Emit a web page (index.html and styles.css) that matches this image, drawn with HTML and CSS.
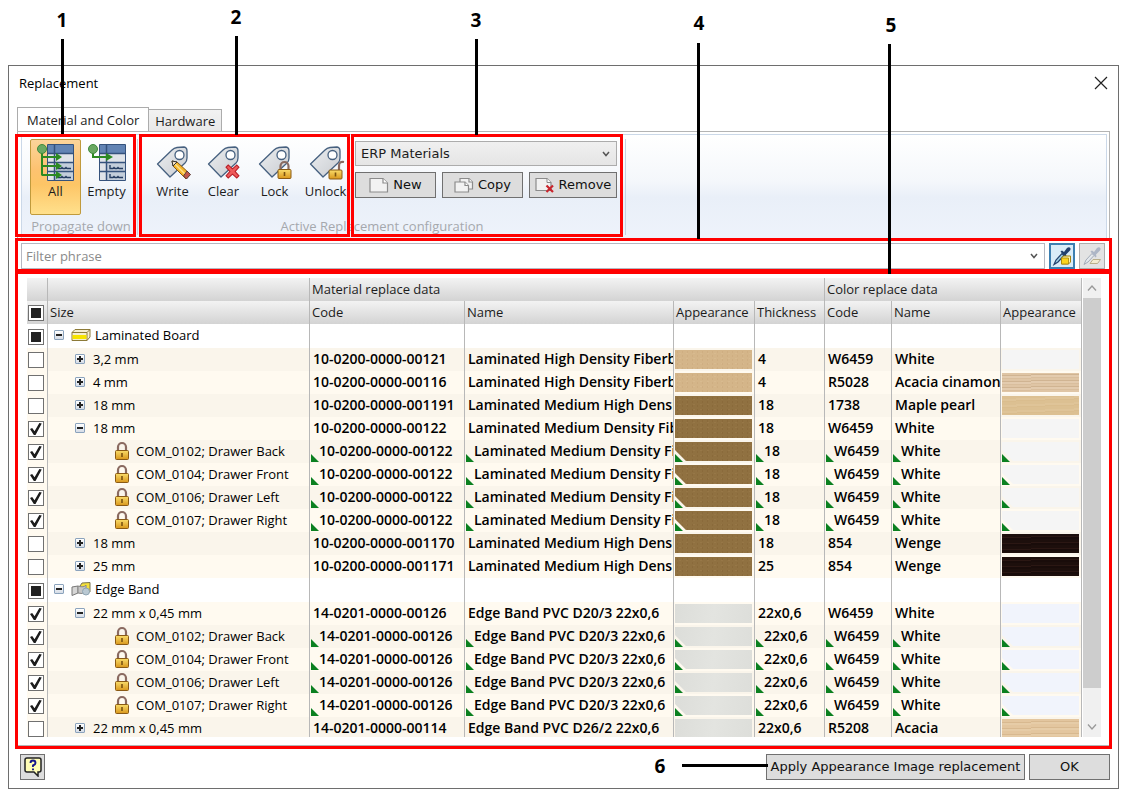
FILE: index.html
```html
<!DOCTYPE html>
<html lang="en">
<head>
<meta charset="utf-8">
<title>Replacement</title>
<link rel="stylesheet" href="styles.css">
</head>
<body>
<svg class="defs" aria-hidden="true">
  <defs>
    <linearGradient id="gold" x1="0" y1="0" x2="0" y2="1"><stop offset="0" stop-color="#f9dc6a"/><stop offset="1" stop-color="#d9971c"/></linearGradient>
    <linearGradient id="steel" x1="0" y1="0" x2="1" y2="1"><stop offset="0" stop-color="#eceef0"/><stop offset="1" stop-color="#c9ccd1"/></linearGradient>
    <symbol id="tag" viewBox="0 0 36 36"><path d="M2.500 20 17 6Q19 4 22 3.500L29 3Q32 3.500 32 7V14Q32 17 30 19L15 33Z" fill="url(#steel)" stroke="#46607f" stroke-width="1.300" stroke-linejoin="round"/><circle cx="24.500" cy="11" r="4.500" fill="#fff" stroke="#46607f" stroke-width="1.300"/></symbol>
    <symbol id="padlock" viewBox="0 0 16 20"><path d="M4 10V6a4 4 0 0 1 8 0v4" fill="none" stroke="#8a6a60" stroke-width="2.200"/><rect x="1.500" y="9.500" width="13" height="9" rx="1" fill="url(#gold)" stroke="#8a5a14"/><path d="M8 12v4" stroke="#7a5210" stroke-width="1.600"/></symbol>
    <symbol id="cross" viewBox="0 0 14 14"><path d="M1 3 3 1 7 4.500 11 1 13 3 9.500 7 13 11 11 13 7 9.500 3 13 1 11 4.500 7Z" fill="#ee5a5a" stroke="#b81f28" stroke-width="1"/></symbol>
    <symbol id="grid" viewBox="0 0 27 37"><path d="M.5.5h26v36H.5Z" fill="#dfe3e8" stroke="#35527c"/><path d="M1 1h25v8H1Z" fill="#6284b4"/><path d="M8 19h18v17H8Z" fill="#c3cedb"/><path d="M7.500 1v35M1 9.500h25M1 18.500h25M1 27.500h25" stroke="#35527c" stroke-width="1.500"/><path d="M11 21v3.500h3l1-1 1 1h2l1-1 1 1h4M11 30v3.500h3l1-1 1 1h2l1-1 1 1h4" fill="none" stroke="#263f63" stroke-width="1.400"/></symbol>
    <symbol id="board" viewBox="0 0 20 14"><path d="M1 4.500 4 1.500H19V9L16 12.500H1Z" fill="#f6efd0" stroke="#8c7a38" stroke-linejoin="round"/><path d="M1 4.500H16V12.500M16 4.500 19 1.500" fill="none" stroke="#8c7a38"/><path d="M1.500 7H15.500v4H1.500Z" fill="#f7e300"/></symbol>
    <symbol id="band" viewBox="0 0 20 14"><path d="M9 4 11 1 19 .5V10L13 8Z" fill="#f3df3a" stroke="#777250"/><path d="M1 5 7 4V11L1 13.500Z" fill="#d6d6d6" stroke="#777"/><path d="M7 4Q13 6 15 3V9Q11 13 7 11Z" fill="#c6c6c6" stroke="#888"/><circle cx="15" cy="9.500" r="3.500" fill="#b9c8d2" stroke="#8fa5b3"/></symbol>
    <symbol id="sheet" viewBox="0 0 20 16"><path d="M1 1.500H14L18.500 6V15H1Z" fill="#f2f2f2" stroke="#8b8b8b" stroke-width="1.200"/><path d="M14 1.500V6H18.500" fill="#fff" stroke="#8b8b8b" stroke-width="1.200"/></symbol>
    <symbol id="chev" viewBox="0 0 10 8"><path d="M2 2 5 5.500 8 2" fill="none" stroke="#555" stroke-width="1.500"/></symbol>
  </defs>
</svg>

<main class="dialog">
  <header class="titlebar">
    <h1>Replacement</h1>
    <button class="close" aria-label="Close"><svg width="14" height="14" viewBox="0 0 14 14"><path d="M1 1 13 13M13 1 1 13" stroke="#222" stroke-width="1.200"/></svg></button>
  </header>
  <nav class="tabs" role="tablist">
    <button class="tab active" role="tab" aria-selected="true">Material and Color</button>
    <button class="tab" role="tab" aria-selected="false">Hardware</button>
  </nav>
  <section class="panel">
    <div class="ribbon">
      <div class="group">
        <div class="tools">
          <button class="tool selected">
            <svg width="38" height="38" viewBox="0 0 38 38"><use href="#grid" x="10" y="1" width="27" height="37"/><path d="M5 6V32.500M5 14H21M5 23H21M5 32H21" fill="none" stroke="#2c8a22" stroke-width="2"/><path d="M19 10 25 14 19 18ZM19 19 25 23 19 27ZM19 28 25 32 19 36Z" fill="#2c8a22"/><circle cx="5" cy="6" r="4.500" fill="#6aa862" stroke="#3f8a3a"/></svg>
            All</button>
          <button class="tool">
            <svg width="38" height="38" viewBox="0 0 38 38"><use href="#grid" x="11" y="1" width="27" height="37"/><path d="M5 6V14H20" fill="none" stroke="#2c8a22" stroke-width="2"/><path d="M18 10 25 14 18 18Z" fill="#2c8a22"/><circle cx="5" cy="6" r="4.500" fill="#6aa862" stroke="#3f8a3a"/></svg>
            Empty</button>
        </div>
        <span class="caption">Propagate down</span>
      </div>
      <div class="group wide">
        <div class="tools">
          <button class="tool">
            <svg width="38" height="38" viewBox="0 0 38 38"><use href="#tag" x="1" y="1" width="36" height="36"/><path d="M18 18 23 19 36 31 32 36 19 23Z" fill="#f5b62b" stroke="#8a5a14"/><path d="M20 20 33 33" stroke="#fde08a" stroke-width="1.500"/><path d="M18 18 23 19 19 23Z" fill="#f8e2c4" stroke="#333"/><path d="M33 28 36.500 31.500 32.500 36 29.500 33Z" fill="#c2574b" stroke="#5c4038"/></svg>
            Write</button>
          <button class="tool">
            <svg width="38" height="38" viewBox="0 0 38 38"><use href="#tag" x="1" y="1" width="36" height="36"/><use href="#cross" x="20" y="21" width="15" height="15"/></svg>
            Clear</button>
          <button class="tool">
            <svg width="38" height="38" viewBox="0 0 38 38"><use href="#tag" x="1" y="1" width="36" height="36"/><use href="#padlock" x="20" y="17" width="17" height="20"/></svg>
            Lock</button>
          <button class="tool">
            <svg width="38" height="38" viewBox="0 0 38 38"><use href="#tag" x="1" y="1" width="36" height="36"/><path d="M32 28V23Q32 18 37 19" fill="none" stroke="#8a6a60" stroke-width="2.200"/><rect x="22" y="27" width="13" height="9" rx="1" fill="url(#gold)" stroke="#8a5a14"/><path d="M28.500 29.500v4" stroke="#7a5210" stroke-width="1.600"/></svg>
            Unlock</button>
          <div class="config">
            <div class="picker"><select aria-label="Replacement configuration"><option>ERP Materials</option></select><svg width="10" height="8"><use href="#chev"/></svg></div>
            <div class="actions">
              <button class="push"><svg width="20" height="16"><use href="#sheet"/></svg>New</button>
              <button class="push"><svg width="20" height="16" viewBox="0 0 20 16"><path d="M6 5V1.500H15L18.500 5V12H15" fill="#f2f2f2" stroke="#8b8b8b" stroke-width="1.200"/><path d="M1 5H11L14.500 8.500V15H1Z" fill="#f2f2f2" stroke="#8b8b8b" stroke-width="1.200"/><path d="M11 5V8.500H14.500M15 1.500V5H18.500" fill="#fff" stroke="#8b8b8b" stroke-width="1.200"/></svg>Copy</button>
              <button class="push"><svg width="20" height="16" viewBox="0 0 20 16"><path d="M1 1.500H12L16 5.500V13.500H1Z" fill="#f2f2f2" stroke="#8b8b8b" stroke-width="1.200"/><path d="M12 1.500V5.500H16" fill="#fff" stroke="#8b8b8b"/><path d="M11.500 8.500 18 15M18 8.500 11.500 15" stroke="#c9252d" stroke-width="2.200"/></svg>Remove</button>
            </div>
          </div>
        </div>
        <span class="caption">Active Replacement configuration</span>
      </div>
    </div>

    <div class="filter">
      <div class="combo">
        <input type="text" placeholder="Filter phrase" aria-label="Filter phrase">
        <button aria-label="Filter history"><svg width="10" height="8"><use href="#chev"/></svg></button>
      </div>
      <button class="pick on" aria-label="Pick material"><svg width="20" height="20" viewBox="0 0 20 20"><path d="M2 18.500 4 14 10 7.500 12 9.500 6 16Z" fill="#9fd0e4" stroke="#22406d" stroke-width="1.200"/><path d="M8.500 5.500 10 4.500 12 6 15 2Q17.500 .5 18.500 2.500Q19 4 17 5.500L14 8.500 14.500 10.500 13.500 11.500Z" fill="#22406d"/><path d="M9.500 12 11.500 10H18.500V16L16.500 18H9.500Z" fill="#fff3a8" stroke="#a5830b" stroke-linejoin="round"/><path d="M9.500 12H16.500V18H9.500Z" fill="#fbd31c" stroke="#a5830b" stroke-width=".8"/></svg></button>
      <button class="pick" aria-label="Pick appearance" disabled><svg width="20" height="20" viewBox="0 0 20 20"><path d="M2 18.500 4 14 10 7.500 12 9.500 6 16Z" fill="#e4e8ec" stroke="#a3abb8"/><path d="M8.500 5.500 10 4.500 12 6 15 2Q17.500 .5 18.500 2.500Q19 4 17 5.500L14 8.500 14.500 10.500 13.500 11.500Z" fill="#adb6c6"/><path d="M8 17.500 11 13.500H18.500L15.500 17.500Z" fill="#f3ecd0" stroke="#b9af8b"/></svg></button>
    </div>

    <div class="list">
      <div class="viewport">
        <table>
          <colgroup><col class="c-check"><col class="c-size"><col class="c-code"><col class="c-name"><col class="c-look"><col class="c-thick"><col class="c-ccode"><col class="c-cname"><col class="c-look"></colgroup>
          <thead>
            <tr><th></th><th></th><th colspan="4">Material replace data</th><th colspan="3">Color replace data</th></tr>
            <tr><th><input type="checkbox" class="mixed" aria-label="Select all"></th><th>Size</th><th>Code</th><th>Name</th><th>Appearance</th><th>Thickness</th><th>Code</th><th>Name</th><th>Appearance</th></tr>
          </thead>
          <tbody>
            <tr class="head"><td><input type="checkbox" class="mixed" aria-label="Laminated Board"></td><td><div class="node"><button class="exp open" aria-label="Collapse"></button><svg width="20" height="14"><use href="#board"/></svg>Laminated Board</div></td><td></td><td></td><td></td><td></td><td></td><td></td><td></td></tr>
            <tr><td><input type="checkbox" aria-label="3,2 mm"></td><td><div class="node l1"><button class="exp" aria-label="Expand"></button>3,2 mm</div></td><td>10-0200-0000-00121</td><td>Laminated High Density Fiberboard</td><td><i class="sw tan"></i></td><td>4</td><td>W6459</td><td>White</td><td><i class="sw white"></i></td></tr>
            <tr><td><input type="checkbox" aria-label="4 mm"></td><td><div class="node l1"><button class="exp" aria-label="Expand"></button>4 mm</div></td><td>10-0200-0000-00116</td><td>Laminated High Density Fiberboard</td><td><i class="sw tan"></i></td><td>4</td><td>R5028</td><td>Acacia cinamon</td><td><i class="sw cinamon"></i></td></tr>
            <tr><td><input type="checkbox" aria-label="18 mm"></td><td><div class="node l1"><button class="exp" aria-label="Expand"></button>18 mm</div></td><td>10-0200-0000-001191</td><td>Laminated Medium High Density</td><td><i class="sw brown"></i></td><td>18</td><td>1738</td><td>Maple pearl</td><td><i class="sw maple"></i></td></tr>
            <tr><td><input type="checkbox" checked aria-label="18 mm"></td><td><div class="node l1"><button class="exp open" aria-label="Collapse"></button>18 mm</div></td><td>10-0200-0000-00122</td><td>Laminated Medium Density Fiberboard</td><td><i class="sw brown"></i></td><td>18</td><td>W6459</td><td>White</td><td><i class="sw white"></i></td></tr>
            <tr class="item"><td><input type="checkbox" checked aria-label="COM_0102"></td><td><div class="node l2"><svg width="16" height="20"><use href="#padlock"/></svg>COM_0102; Drawer Back</div></td><td>10-0200-0000-00122</td><td>Laminated Medium Density Fiberboard</td><td><i class="sw brown"></i></td><td>18</td><td>W6459</td><td>White</td><td><i class="sw white"></i></td></tr>
            <tr class="item"><td><input type="checkbox" checked aria-label="COM_0104"></td><td><div class="node l2"><svg width="16" height="20"><use href="#padlock"/></svg>COM_0104; Drawer Front</div></td><td>10-0200-0000-00122</td><td>Laminated Medium Density Fiberboard</td><td><i class="sw brown"></i></td><td>18</td><td>W6459</td><td>White</td><td><i class="sw white"></i></td></tr>
            <tr class="item"><td><input type="checkbox" checked aria-label="COM_0106"></td><td><div class="node l2"><svg width="16" height="20"><use href="#padlock"/></svg>COM_0106; Drawer Left</div></td><td>10-0200-0000-00122</td><td>Laminated Medium Density Fiberboard</td><td><i class="sw brown"></i></td><td>18</td><td>W6459</td><td>White</td><td><i class="sw white"></i></td></tr>
            <tr class="item"><td><input type="checkbox" checked aria-label="COM_0107"></td><td><div class="node l2"><svg width="16" height="20"><use href="#padlock"/></svg>COM_0107; Drawer Right</div></td><td>10-0200-0000-00122</td><td>Laminated Medium Density Fiberboard</td><td><i class="sw brown"></i></td><td>18</td><td>W6459</td><td>White</td><td><i class="sw white"></i></td></tr>
            <tr><td><input type="checkbox" aria-label="18 mm"></td><td><div class="node l1"><button class="exp" aria-label="Expand"></button>18 mm</div></td><td>10-0200-0000-001170</td><td>Laminated Medium High Density</td><td><i class="sw brown"></i></td><td>18</td><td>854</td><td>Wenge</td><td><i class="sw wenge"></i></td></tr>
            <tr><td><input type="checkbox" aria-label="25 mm"></td><td><div class="node l1"><button class="exp" aria-label="Expand"></button>25 mm</div></td><td>10-0200-0000-001171</td><td>Laminated Medium High Density</td><td><i class="sw brown"></i></td><td>25</td><td>854</td><td>Wenge</td><td><i class="sw wenge"></i></td></tr>
            <tr class="head"><td><input type="checkbox" class="mixed" aria-label="Edge Band"></td><td><div class="node"><button class="exp open" aria-label="Collapse"></button><svg width="20" height="14"><use href="#band"/></svg>Edge Band</div></td><td></td><td></td><td></td><td></td><td></td><td></td><td></td></tr>
            <tr><td><input type="checkbox" checked aria-label="22 mm x 0,45 mm"></td><td><div class="node l1"><button class="exp open" aria-label="Collapse"></button>22 mm x 0,45 mm</div></td><td>14-0201-0000-00126</td><td>Edge Band PVC D20/3 22x0,6</td><td><i class="sw grey"></i></td><td>22x0,6</td><td>W6459</td><td>White</td><td><i class="sw ice"></i></td></tr>
            <tr class="item"><td><input type="checkbox" checked aria-label="COM_0102"></td><td><div class="node l2"><svg width="16" height="20"><use href="#padlock"/></svg>COM_0102; Drawer Back</div></td><td>14-0201-0000-00126</td><td>Edge Band PVC D20/3 22x0,6</td><td><i class="sw grey"></i></td><td>22x0,6</td><td>W6459</td><td>White</td><td><i class="sw ice"></i></td></tr>
            <tr class="item"><td><input type="checkbox" checked aria-label="COM_0104"></td><td><div class="node l2"><svg width="16" height="20"><use href="#padlock"/></svg>COM_0104; Drawer Front</div></td><td>14-0201-0000-00126</td><td>Edge Band PVC D20/3 22x0,6</td><td><i class="sw grey"></i></td><td>22x0,6</td><td>W6459</td><td>White</td><td><i class="sw ice"></i></td></tr>
            <tr class="item"><td><input type="checkbox" checked aria-label="COM_0106"></td><td><div class="node l2"><svg width="16" height="20"><use href="#padlock"/></svg>COM_0106; Drawer Left</div></td><td>14-0201-0000-00126</td><td>Edge Band PVC D20/3 22x0,6</td><td><i class="sw grey"></i></td><td>22x0,6</td><td>W6459</td><td>White</td><td><i class="sw ice"></i></td></tr>
            <tr class="item"><td><input type="checkbox" checked aria-label="COM_0107"></td><td><div class="node l2"><svg width="16" height="20"><use href="#padlock"/></svg>COM_0107; Drawer Right</div></td><td>14-0201-0000-00126</td><td>Edge Band PVC D20/3 22x0,6</td><td><i class="sw grey"></i></td><td>22x0,6</td><td>W6459</td><td>White</td><td><i class="sw ice"></i></td></tr>
            <tr><td><input type="checkbox" aria-label="22 mm x 0,45 mm"></td><td><div class="node l1"><button class="exp" aria-label="Expand"></button>22 mm x 0,45 mm</div></td><td>14-0201-0000-00114</td><td>Edge Band PVC D26/2 22x0,6</td><td><i class="sw grey"></i></td><td>22x0,6</td><td>R5208</td><td>Acacia</td><td><i class="sw acacia"></i></td></tr>
          </tbody>
        </table>
      </div>
      <div class="scrollbar">
        <button aria-label="Scroll up"><svg width="12" height="8" viewBox="0 0 12 8"><path d="M2 6.500 6 2 10 6.500" fill="none" stroke="#999" stroke-width="1.300"/></svg></button>
        <div class="track"><div class="thumb"></div></div>
        <button aria-label="Scroll down"><svg width="12" height="8" viewBox="0 0 12 8"><path d="M2 1.500 6 6 10 1.500" fill="none" stroke="#999" stroke-width="1.300"/></svg></button>
      </div>
    </div>
  </section>
  <footer class="footer">
    <button class="help" aria-label="Help"><svg width="18" height="20" viewBox="0 0 18 20"><path d="M3 1H15Q17 1 17 3V13Q17 15 15 15H14V19L10 15H3Q1 15 1 13V3Q1 1 3 1Z" fill="#fffdb5" stroke="#222" stroke-width="1.500"/><path d="M6.500 6Q6.500 3.500 9 3.500T11.500 6Q11.500 7.500 9 8.500V10M9 11.500V13.200" fill="none" stroke="#16168c" stroke-width="1.900"/></svg></button>
    <button class="push apply">Apply Appearance Image replacement</button>
    <button class="push ok">OK</button>
  </footer>
</main>

<div class="frame f1"></div><div class="frame f2"></div><div class="frame f3"></div><div class="frame f4"></div><div class="frame f5"></div>
<div class="line v n1"></div><div class="line v n2"></div><div class="line v n3"></div><div class="line v n4"></div><div class="line v n5"></div><div class="line h n6"></div>
<span class="num m1">1</span><span class="num m2">2</span><span class="num m3">3</span><span class="num m4">4</span><span class="num m5">5</span><span class="num m6">6</span>
</body>
</html>
```
FILE: styles.css
```css
* { box-sizing: border-box; }

body {
  position: relative;
  display: flex;
  height: 100vh;
  margin: 0;
  padding: 65px 4px 6px 8px;
  overflow: hidden;
  background: #fff;
  color: #1c1c1c;
  font: 13px/18px "Open Sans", "Noto Sans", sans-serif;
}

button, input, select { font: inherit; color: inherit; margin: 0; }
button { padding: 0; border: 0; background: none; }
svg { display: block; flex: none; }
.defs { position: absolute; width: 0; height: 0; }

.dialog {
  flex: 1;
  min-width: 0;
  display: flex;
  flex-direction: column;
  padding: 0 8px 8px 8px;
  border: 1px solid #6e6e6e;
}

.titlebar {
  display: flex;
  align-items: center;
  justify-content: space-between;
  height: 34px;
  padding: 0 0 0 2px;
}
.titlebar h1 { margin: 0; font-size: 13px; font-weight: 400; color: #000; }
.close { padding: 2px; }

.tabs {
  display: flex;
  align-items: flex-end;
  height: 31px;
}
.tab {
  height: 22px;
  padding: 0 6px;
  border: 1px solid #acacac;
  border-bottom: 0;
  border-left: 0;
  background: linear-gradient(#f2f2f2, #e8e8e8);
}
.tab.active {
  height: 24px;
  padding: 0 9px;
  border-left: 1px solid #acacac;
  background: #fff;
}

.panel {
  flex: 1;
  min-height: 0;
  display: flex;
  flex-direction: column;
  padding: 2px 2px 8px 3px;
  border: 1px solid #b4b4b4;
}

.ribbon {
  display: flex;
  height: 105px;
  padding: 4px 2px 4px;
  border: 1px solid #cbd8e8;
  border-bottom: 0;
  background: linear-gradient(#fff, #f4f7fb 45%, #e9eff8 60%, #eef3fb);
}
.group {
  display: flex;
  flex-direction: column;
  justify-content: space-between;
  padding: 0 5px 0 6px;
  border-right: 1px solid #c5d3e2;
}
.group.wide { padding: 0 8px 0 9px; }
.tools { display: flex; }
.tool {
  display: flex;
  flex-direction: column;
  align-items: center;
  width: 51px;
  height: 76px;
  padding-top: 3px;
  gap: 1px;
  border: 1px solid transparent;
  border-radius: 2px;
}
.tool.selected {
  border-color: #c09a3c;
  background: linear-gradient(#fcd49a, #fdc270 40%, #fdc566 60%, #ffe08c);
}
.caption { text-align: center; color: #a5a8ad; white-space: nowrap; }

.config { margin-left: 4px; padding-top: 2px; }
.picker {
  display: flex;
  align-items: center;
  height: 25px;
  padding: 0 5px;
  border: 1px solid #acacac;
  background: linear-gradient(#f0f0f0, #e5e5e5);
}
.picker select {
  flex: 1;
  appearance: none;
  border: 0;
  padding: 0;
  background: none;
  font-family: "DejaVu Sans", sans-serif;
  font-size: 13px;
}
.actions { display: flex; gap: 6px; margin-top: 6px; }
.push {
  display: flex;
  align-items: center;
  justify-content: center;
  gap: 4px;
  width: 81px;
  height: 26px;
  border: 1px solid #707070;
  background: #ddd;
  color: #111;
  font-family: "DejaVu Sans", sans-serif;
  font-size: 13px;
  white-space: nowrap;
}
.actions .push:last-child { width: 88px; }

.filter {
  display: flex;
  gap: 4px;
  margin-top: 4px;
  padding-right: 2px;
}
.combo {
  flex: 1;
  display: flex;
  height: 26px;
  padding: 0 5px 0 4px;
  border: 1px solid #b5b8c2;
  background: #fff;
}
.combo input {
  flex: 1;
  min-width: 0;
  padding: 0;
  border: 0;
  outline: 0;
  background: none;
}
.combo input::placeholder { color: #8a8a8a; opacity: 1; }
.pick {
  display: grid;
  place-items: center;
  width: 26px;
  height: 26px;
  border: 1px solid #adadad;
  background: #e3e3e3;
}
.pick.on { border: 2px solid #3c7fb1; background: #d9ecf8; }

.list {
  flex: 1;
  min-height: 0;
  display: flex;
  gap: 1px;
  margin-top: 9px;
  padding: 0 6px 0 6px;
}
.viewport { flex: 1; min-width: 0; overflow: hidden; }
table {
  width: 100%;
  table-layout: fixed;
  border-collapse: separate;
  border-spacing: 0;
}
.c-check { width: 21px; }
.c-size { width: 262px; }
.c-code { width: 155px; }
.c-look { width: 81px; }
.c-thick { width: 70px; }
.c-ccode { width: 67px; }
.c-cname { width: 109px; }

th, td {
  position: relative;
  height: 23px;
  padding: 0 2px 2px 3px;
  border-right: 1px solid #b8b8b8;
  line-height: 18px;
  text-align: left;
  white-space: nowrap;
  overflow: hidden;
}
th {
  font-weight: 400;
  padding: 0 0 2px 2px;
  background: linear-gradient(#f3f3f3, #d3d3d3);
}
td { font-size: 14px; font-weight: 600; color: #000; }
td:nth-child(2) { padding: 0 0 2px; font-size: 13px; font-weight: 400; }
th:first-child, td:first-child { padding: 1px 0 0 1px; }
tbody tr { --row: #fffaf0; }
tbody tr:nth-child(even) { --row: #faf5eb; }
tbody tr.head { --row: #fff; }
tbody tr.head td { height: 24px; }
td { background: var(--row); }
td:first-child { background: #fffaf0; }
.head td:first-child { background: #fff; }

.item td:nth-child(n+3) { padding-left: 9px; }
td:has(.sw), .item td:has(.sw) { padding: 0 2px 0 1px; }
.item td:nth-child(n+3)::before {
  content: "";
  position: absolute;
  left: 1px;
  bottom: 1px;
  width: 12px;
  height: 12px;
  background: var(--row);
  clip-path: polygon(0 0, 100% 100%, 0 100%);
}
.item td:nth-child(n+3)::after {
  content: "";
  position: absolute;
  left: 1px;
  bottom: 1px;
  width: 8px;
  height: 8px;
  background: #0b8020;
  clip-path: polygon(0 0, 100% 100%, 0 100%);
}

input[type="checkbox"] {
  appearance: none;
  display: grid;
  place-items: center;
  width: 16px;
  height: 16px;
  border: 1px solid #707070;
  background: #fff;
}
input.mixed::before { content: ""; width: 10px; height: 10px; background: #212121; }
input:checked::before {
  content: "";
  width: 12px;
  height: 12px;
  background: #1c1c1c;
  clip-path: polygon(0 50%, 18% 42%, 38% 68%, 78% 0, 98% 4%, 46% 100%, 32% 100%);
}

.node { display: flex; align-items: center; gap: 4px; height: 20px; padding-left: 6px; }
.node.l1 { padding-left: 27px; gap: 8px; }
.node.l2 { padding-left: 66px; gap: 6px; }
.exp {
  flex: none;
  width: 10px;
  height: 10px;
  margin-right: 3px;
  border: 1px solid #8ba3bd;
  border-radius: 1px;
  background:
    linear-gradient(#222, #222) center / 6px 2px no-repeat,
    linear-gradient(#222, #222) center / 2px 6px no-repeat,
    linear-gradient(#fff, #d5dce6);
}
.l1 .exp { margin-right: 0; }
.exp.open {
  background:
    linear-gradient(#222, #222) center / 6px 2px no-repeat,
    linear-gradient(#fff, #d5dce6);
}

.sw { display: block; height: 19px; }
.tan { background: radial-gradient(#cfae82 1px, transparent 1px) 0 0 / 5px 4px, radial-gradient(#d8ba8f 1px, transparent 1px) 2px 1px / 7px 5px, #d4b589; }
.brown { background: radial-gradient(#8a6a3b 1px, transparent 1px) 0 0 / 5px 4px, radial-gradient(#977747 1px, transparent 1px) 2px 1px / 7px 5px, #907141; }
.white { background: #f5f5f5; }
.grey { background: linear-gradient(100deg, #dcddd9, #e3e4e0 50%, #dddeda); }
.ice { background: #f1f4fc; }
.maple { background: repeating-linear-gradient(178deg, #dcc092 0 3px, #dfc498 3px 5px, #dabd8e 5px 6px); }
.cinamon { background: repeating-linear-gradient(179deg, #dfc5a5 0 2px, #d0b492 2px 3px, #e3cbae 3px 5px, #d9be9d 5px 6px); }
.acacia { background: repeating-linear-gradient(179deg, #e3c69f 0 3px, #d8b990 3px 4px, #e6cca7 4px 6px); }
.wenge { background: repeating-linear-gradient(179deg, #1d0f0c 0 3px, #2b1713 3px 4px, #190c0a 4px 6px); }

.scrollbar {
  display: flex;
  flex-direction: column;
  width: 18px;
  background: #f0f0f0;
}
.scrollbar button { display: grid; place-items: center; height: 20px; }
.track { flex: 1; }
.thumb { height: 93%; background: #cdcdcd; }

.footer { display: flex; gap: 4px; padding: 8px 0 0 3px; }
.help {
  display: grid;
  place-items: center;
  width: 25px;
  height: 26px;
  margin-right: auto;
  border: 1px solid #707070;
  background: #ddd;
}
.push.apply { width: 259px; }
.push.ok { width: 81px; }

.frame { position: absolute; border: 3px solid #f00; pointer-events: none; }
.f1 { left: 15px; top: 134px; width: 121px; height: 103px; }
.f2 { left: 139px; top: 134px; width: 211px; height: 103px; }
.f3 { left: 351px; top: 134px; width: 272px; height: 103px; }
.f4 { left: 15px; right: 11px; top: 238px; height: 34px; }
.f5 { left: 15px; right: 11px; top: 271px; bottom: 46px; }

.line { position: absolute; background: #000; pointer-events: none; }
.line.v { width: 3px; }
.line.h { height: 3px; }
.n1 { left: 61px; top: 39px; height: 95px; }
.n2 { left: 235px; top: 36px; height: 99px; }
.n3 { left: 475px; top: 39px; height: 96px; }
.n4 { left: 697px; top: 43px; height: 196px; }
.n5 { left: 888px; top: 44px; height: 230px; }
.n6 { right: 355px; bottom: 28px; width: 86px; }

.num {
  position: absolute;
  width: 20px;
  color: #000;
  font-size: 19px;
  line-height: 24px;
  font-weight: 700;
  text-align: center;
}
.m1 { left: 52px; top: 8px; }
.m2 { left: 226px; top: 5px; }
.m3 { left: 466px; top: 8px; }
.m4 { left: 689px; top: 11px; }
.m5 { left: 881px; top: 13px; }
.m6 { right: 453px; bottom: 17px; }
```
